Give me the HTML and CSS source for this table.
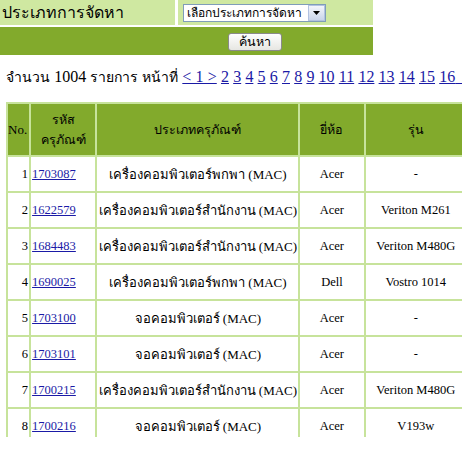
FILE: index.html
```html
<!DOCTYPE html>
<html>
<head>
<meta charset="utf-8">
<link rel="stylesheet" href="styles.css">
</head>
<body>
<div class="page">
  <table class="search">
    <tr>
      <td class="label">ประเภทการจัดหา</td>
      <td class="field">
        <span class="select"><span class="select-text">เลือกประเภทการจัดหา</span><span class="select-arrow"><svg width="7" height="4" viewBox="0 0 7 4"><path d="M0 0h7L3.5 4z" fill="#000"/></svg></span></span>
      </td>
    </tr>
    <tr>
      <td class="actions" colspan="2"><span class="btn">ค้นหา</span></td>
    </tr>
  </table>

  <p class="count"><span class="count-label">จำนวน</span> 1004 <span class="count-label">รายการ หน้าที่</span> <a href="#">&lt; 1 &gt;</a> <a href="#">2</a> <a href="#">3</a> <a href="#">4</a> <a href="#">5</a> <a href="#">6</a> <a href="#">7</a> <a href="#">8</a> <a href="#">9</a> <a href="#">10</a> <a href="#">11</a> <a href="#">12</a> <a href="#">13</a> <a href="#">14</a> <a href="#">15</a> <a href="#">16</a><a href="#" class="more"> 17</a></p>

  <table class="list">
    <tr class="head">
      <th class="c-no">No.</th>
      <th class="c-code th-thai">รหัส<br>ครุภัณฑ์</th>
      <th class="c-type th-thai">ประเภทครุภัณฑ์</th>
      <th class="c-brand th-thai">ยี่ห้อ</th>
      <th class="c-model th-thai">รุ่น</th>
    </tr>
    <tr><td class="no">1</td><td class="code"><a href="#">1703087</a></td><td class="type">เครื่องคอมพิวเตอร์พกพา (MAC)</td><td class="mid">Acer</td><td class="mid">-</td></tr>
    <tr><td class="no">2</td><td class="code"><a href="#">1622579</a></td><td class="type">เครื่องคอมพิวเตอร์สำนักงาน (MAC)</td><td class="mid">Acer</td><td class="mid">Veriton M261</td></tr>
    <tr><td class="no">3</td><td class="code"><a href="#">1684483</a></td><td class="type">เครื่องคอมพิวเตอร์สำนักงาน (MAC)</td><td class="mid">Acer</td><td class="mid">Veriton M480G</td></tr>
    <tr><td class="no">4</td><td class="code"><a href="#">1690025</a></td><td class="type">เครื่องคอมพิวเตอร์พกพา (MAC)</td><td class="mid">Dell</td><td class="mid">Vostro 1014</td></tr>
    <tr><td class="no">5</td><td class="code"><a href="#">1703100</a></td><td class="type">จอคอมพิวเตอร์ (MAC)</td><td class="mid">Acer</td><td class="mid">-</td></tr>
    <tr><td class="no">6</td><td class="code"><a href="#">1703101</a></td><td class="type">จอคอมพิวเตอร์ (MAC)</td><td class="mid">Acer</td><td class="mid">-</td></tr>
    <tr><td class="no">7</td><td class="code"><a href="#">1700215</a></td><td class="type">เครื่องคอมพิวเตอร์สำนักงาน (MAC)</td><td class="mid">Acer</td><td class="mid">Veriton M480G</td></tr>
    <tr><td class="no">8</td><td class="code"><a href="#">1700216</a></td><td class="type">จอคอมพิวเตอร์ (MAC)</td><td class="mid">Acer</td><td class="mid">V193w</td></tr>
  </table>
</div>
</body>
</html>
```
FILE: styles.css
```css
html, body {
  margin: 0;
  padding: 0;
  background: #fff;
}
.page {
  width: 462px;
  height: 437px;
  overflow: hidden;
  font-family: "Liberation Serif", "Times New Roman", serif;
  color: #000;
}
.search {
  width: 373px;
  border-collapse: separate;
  border-spacing: 0;
}
.search td {
  padding: 0;
}
.label {
  width: 178px;
  height: 27px;
  background: #cfe8a1;
  border-right: 3px solid #fff;
  border-bottom: 2px solid #fff;
  font-family: Tahoma, "DejaVu Sans", "Noto Sans", sans-serif;
  font-size: 16px;
  padding-left: 2px !important;
  box-sizing: border-box;
  vertical-align: middle;
}
.field {
  background: #cfe8a1;
  border-bottom: 2px solid #fff;
  padding-left: 5px !important;
  vertical-align: middle;
}
.select {
  display: inline-flex;
  align-items: stretch;
  height: 18px;
  width: 143px;
  box-sizing: border-box;
  border: 1px solid #7f9db9;
  background: #fff;
  margin-top: 1px;
}
.select-text {
  flex: 1;
  font-family: Tahoma, "DejaVu Sans", "Noto Sans", sans-serif;
  font-size: 12px;
  line-height: 16px;
  padding-left: 3px;
  white-space: nowrap;
  overflow: hidden;
}
.select-arrow {
  width: 15px;
  background: linear-gradient(#f4f6fb, #c9d4ea);
  border: 1px solid #b2c2e0;
  display: flex;
  align-items: center;
  justify-content: center;
}
.actions {
  height: 28px;
  background: #82aa2c;
  text-align: center;
  vertical-align: middle;
}
.btn {
  display: inline-block;
  width: 54px;
  height: 18px;
  box-sizing: border-box;
  border: 1px solid #8a8a8a;
  border-radius: 3px;
  background: linear-gradient(#fefefe, #e6e6e2);
  font-family: Tahoma, "DejaVu Sans", "Noto Sans", sans-serif;
  font-size: 12.5px;
  line-height: 16px;
  text-align: center;
  margin-left: 137px;
}
.count {
  margin: 11px 0 0 6px;
  font-size: 16px;
  line-height: 22px;
  white-space: nowrap;
  word-spacing: 0.2px;
}
.count-label {
  font-size: 14px;
}
.count a {
  color: #1a1aa6;
}
.count a.more {
  word-spacing: 4px;
}
.list {
  margin: 13px 0 0 6px;
  background: #c7e39b;
  border-spacing: 2px;
  border-collapse: separate;
  table-layout: fixed;
  width: 462px;
  font-size: 12.5px;
}
.list th {
  background: #82aa2c;
  font-weight: normal;
  height: 51px;
  padding: 0;
  text-align: center;
  vertical-align: middle;
}
.list .th-thai {
  font-family: Tahoma, "DejaVu Sans", "Noto Sans", sans-serif;
  font-size: 12.5px;
}
.list td {
  background: #fff;
  height: 34px;
  padding: 0;
  vertical-align: middle;
}
.c-no { width: 21px; }
.c-code { width: 64px; }
.c-type { width: 200px; }
.c-brand { width: 63px; }
.c-model { width: 100px; }
.list th.c-no {
  text-align: left;
  font-size: 13px;
}
.list td.no {
  text-align: right;
  padding-right: 1px;
}
.list td.code {
  padding-left: 1px;
}
.list td.code a {
  color: #1a1aa6;
}
.list td.type {
  text-align: center;
  font-family: "Liberation Serif", serif;
  font-size: 13px;
}
.list td.mid {
  text-align: center;
}
```
